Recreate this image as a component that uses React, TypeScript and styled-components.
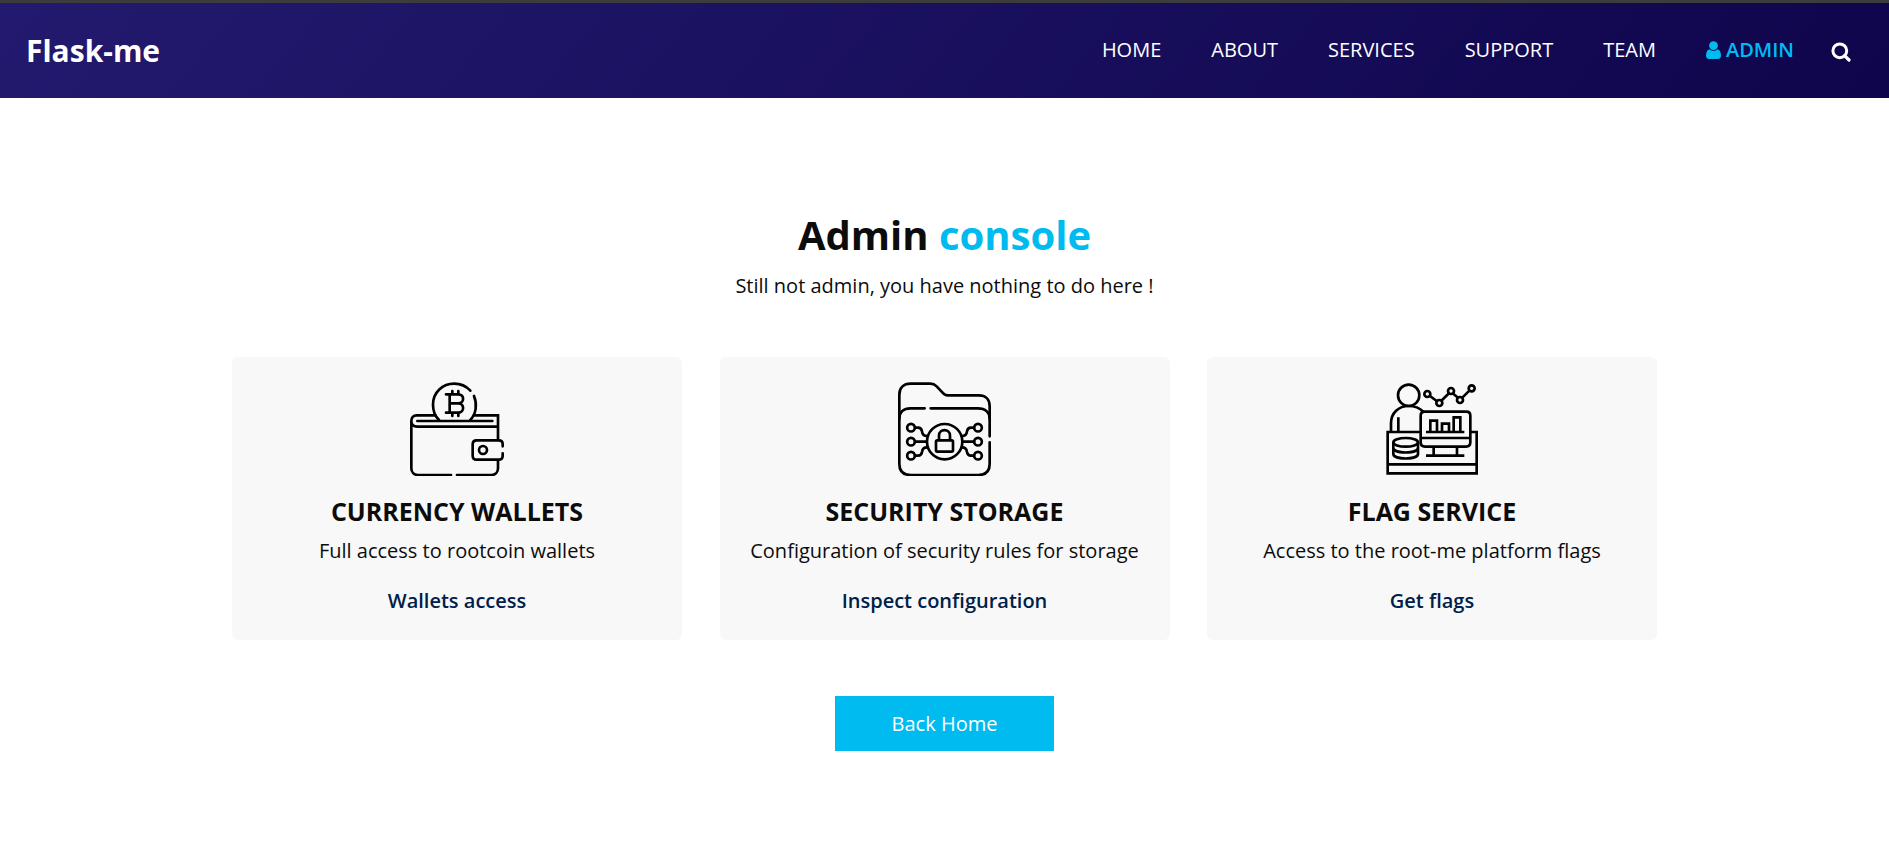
import React from "react";
import styled, { createGlobalStyle } from "styled-components";

const GlobalStyle = createGlobalStyle`
  * { box-sizing: border-box; }
  body {
    margin: 0;
    background: #ffffff;
    color: #0c0c0c;
    font-family: "Open Sans", "Noto Sans", sans-serif;
    font-size: 20px;
    line-height: 30px;
  }
  a { text-decoration: none; }
`;

const Page = styled.div`
  min-height: 860px;
  border-top: 3px solid #3c3c3c;
`;

const Header = styled.header`
  display: flex;
  align-items: center;
  justify-content: space-between;
  height: 95px;
  padding: 0 38px 0 26px;
  background: linear-gradient(130deg, #231a6f, #0f054c);
`;

const Brand = styled.a`
  color: #ffffff;
  font-size: 30px;
  font-weight: 700;
  line-height: 45px;
`;

const Nav = styled.nav`
  display: flex;
  align-items: center;
  padding-bottom: 2px;
`;

const NavLink = styled.a<{ $active?: boolean }>`
  display: flex;
  align-items: center;
  padding: 0 25px;
  color: ${(p) => (p.$active ? "#00bbf0" : "#ffffff")};
  font-weight: ${(p) => (p.$active ? 600 : 400)};
  text-transform: uppercase;

  svg {
    margin-right: 5px;
  }
`;

const SearchButton = styled.button`
  display: flex;
  margin: 4px 0 0 12px;
  padding: 0;
  border: 0;
  background: none;
  color: #ffffff;
`;

const Main = styled.main`
  display: flex;
  flex-direction: column;
  align-items: center;
  width: 1425px;
  margin: 0 auto;
  padding-top: 112px;
`;

const Title = styled.h1`
  margin: 0;
  font-size: 40px;
  font-weight: 700;
  line-height: 50px;

  span {
    color: #00bbf0;
  }
`;

const Text = styled.p`
  margin: 0;
`;

const Subtitle = styled(Text)`
  margin-top: 11px;
`;

const Cards = styled.section`
  display: grid;
  grid-template-columns: repeat(3, 1fr);
  gap: 37.5px;
  width: 100%;
  margin-top: 56px;
`;

const Card = styled.article`
  display: flex;
  flex-direction: column;
  align-items: center;
  height: 283px;
  padding-top: 25px;
  border-radius: 6px;
  background: #f8f8f8;
`;

const CardTitle = styled.h2`
  margin: 20px 0 10px;
  font-size: 25px;
  font-weight: 700;
  line-height: 30px;
  text-transform: uppercase;
`;

const CardLink = styled.a`
  margin-top: 20px;
  color: #00204a;
  font-weight: 600;
`;

const HomeButton = styled.a`
  margin-top: 56px;
  padding: 13px 56.5px 12px;
  background: #00bbf0;
  color: #ffffff;
`;

const LineArt = styled.svg`
  display: block;
  width: 94px;
  height: 94px;
  fill: none;
  stroke: #000000;
  stroke-width: 8;
`;

const UserIcon = () => (
  <svg width="15" height="18" viewBox="0 0 15 18" fill="currentColor">
    <circle cx="7.5" cy="4.6" r="4.4" />
    <path d="M3.5 8.2C1.1 8.8 0 11.6 0 14.6C0 16.8 1.2 18 3.1 18H11.9C13.8 18 15 16.8 15 14.6C15 11.6 13.9 8.8 11.5 8.2C9.2 10.2 5.8 10.2 3.5 8.2Z" />
  </svg>
);

const SearchIcon = () => (
  <svg width="20" height="20" viewBox="0 0 20 20" fill="none" stroke="currentColor">
    <circle cx="8.8" cy="8.8" r="6.9" strokeWidth="3" />
    <path d="M13.8 13.8L18 18" strokeWidth="3.2" strokeLinecap="round" />
  </svg>
);

const WalletIcon = () => (
  <LineArt viewBox="60 50 282 282" strokeLinecap="round">
    <path d="M147 164C134 151 129 136 129 118C129 80 158 55 193 55C212 55 229 63 241 76M252 92C262 116 259 145 241 164" />
    <path d="M136 150H80C70 150 64 157 64 167V309C64 321 72 329 84 329H183M201 329H304C316 329 324 321 324 309V285M324 224V150H253M64 167C64 178 71 184 82 184H322M82 167H307" />
    <path d="M338 243V236C338 229 333 225 326 225H260C252 225 248 229 248 237V271C248 279 252 283 260 283H326C334 283 338 279 338 272V264" />
    <circle cx="279" cy="254" r="12" />
    <path strokeWidth="8" d="M168 87H205C224 87 224 114 205 114H179M205 114C224 114 224 142 205 142H168M179 87V142M187 77V87M205 77V87M187 142V152M205 142V152" />
  </LineArt>
);

const FolderIcon = () => (
  <LineArt viewBox="54 50 282 282" strokeLinecap="round">
    <path d="M329 213V122C329 102 316 90 297 90H203C195 90 192 87 187 81L170 63C164 57 160 55 151 55H92C70 55 58 68 58 88V296C58 317 70 329 92 329H295C317 329 329 317 329 296V231" />
    <path d="M58 160C58 140 71 129 91 129H134M152 129H294C316 129 329 141 329 160" />
    <circle cx="194" cy="229" r="53" />
    <circle cx="93" cy="187" r="11.5" />
    <circle cx="93" cy="229" r="11.5" />
    <circle cx="93" cy="271" r="11.5" />
    <circle cx="294" cy="187" r="11.5" />
    <circle cx="294" cy="229" r="11.5" />
    <circle cx="294" cy="271" r="11.5" />
    <path strokeWidth="8" d="M105 187H114C122 187 125 191 126 198C127 207 132 212 141 212M105 229H139M105 271H114C122 271 125 267 126 260C127 251 132 246 141 246M282 187H273C265 187 262 191 261 198C260 207 255 212 246 212M282 229H248M282 271H273C265 271 262 267 261 260C260 251 255 246 246 246" />
    <rect x="168" y="225" width="51" height="34" rx="4" strokeWidth="8" />
    <path strokeWidth="8" d="M177 224V211C177 189 210 189 210 211V224" />
  </LineArt>
);

const AnalystIcon = () => (
  <LineArt viewBox="45 50 282 282">
    <circle cx="116" cy="90" r="32" />
    <path d="M63 199V174C63 143 86 122 116 122C136 122 150 129 160 139M85 199V156" />
    <path d="M151 200H53V324H320V200H302M53 297H320" />
    <path d="M164 139H289C298 139 301 143 301 151V231C301 240 297 244 288 244H165C156 244 152 240 152 231V151C152 143 156 139 164 139ZM152 218H301" />
    <path d="M168 200H283M181 200V166H201V200M216 200V175H237V200M251 200V156H271V200M191 245V270M261 245V270M168 271H283" />
    <ellipse cx="107" cy="231" rx="37" ry="13" />
    <path d="M70 231V266C70 284 144 284 144 266V231M70 248C70 266 144 266 144 248" />
    <circle cx="172" cy="86" r="9" />
    <circle cx="208" cy="113" r="9" />
    <circle cx="243" cy="77" r="9" />
    <circle cx="270" cy="104" r="9" />
    <circle cx="305" cy="69" r="9" />
    <path d="M180 92L200 107M214 106L237 84M248 84L264 97M277 97L298 76" />
  </LineArt>
);

const navItems = ["Home", "About", "Services", "Support", "Team"];

const services = [
  { title: "Currency wallets", text: "Full access to rootcoin wallets", link: "Wallets access", Icon: WalletIcon },
  { title: "Security storage", text: "Configuration of security rules for storage", link: "Inspect configuration", Icon: FolderIcon },
  { title: "Flag service", text: "Access to the root-me platform flags", link: "Get flags", Icon: AnalystIcon },
];

export default function App() {
  return (
    <Page>
      <GlobalStyle />
      <Header>
        <Brand href="#">Flask-me</Brand>
        <Nav>
          {navItems.map((item) => (
            <NavLink key={item} href="#">{item}</NavLink>
          ))}
          <NavLink href="#" $active>
            <UserIcon />
            Admin
          </NavLink>
          <SearchButton aria-label="Search">
            <SearchIcon />
          </SearchButton>
        </Nav>
      </Header>
      <Main>
        <Title>
          Admin <span>console</span>
        </Title>
        <Subtitle>Still not admin, you have nothing to do here !</Subtitle>
        <Cards>
          {services.map(({ title, text, link, Icon }) => (
            <Card key={title}>
              <Icon />
              <CardTitle>{title}</CardTitle>
              <Text>{text}</Text>
              <CardLink href="#">{link}</CardLink>
            </Card>
          ))}
        </Cards>
        <HomeButton href="#">Back Home</HomeButton>
      </Main>
    </Page>
  );
}
